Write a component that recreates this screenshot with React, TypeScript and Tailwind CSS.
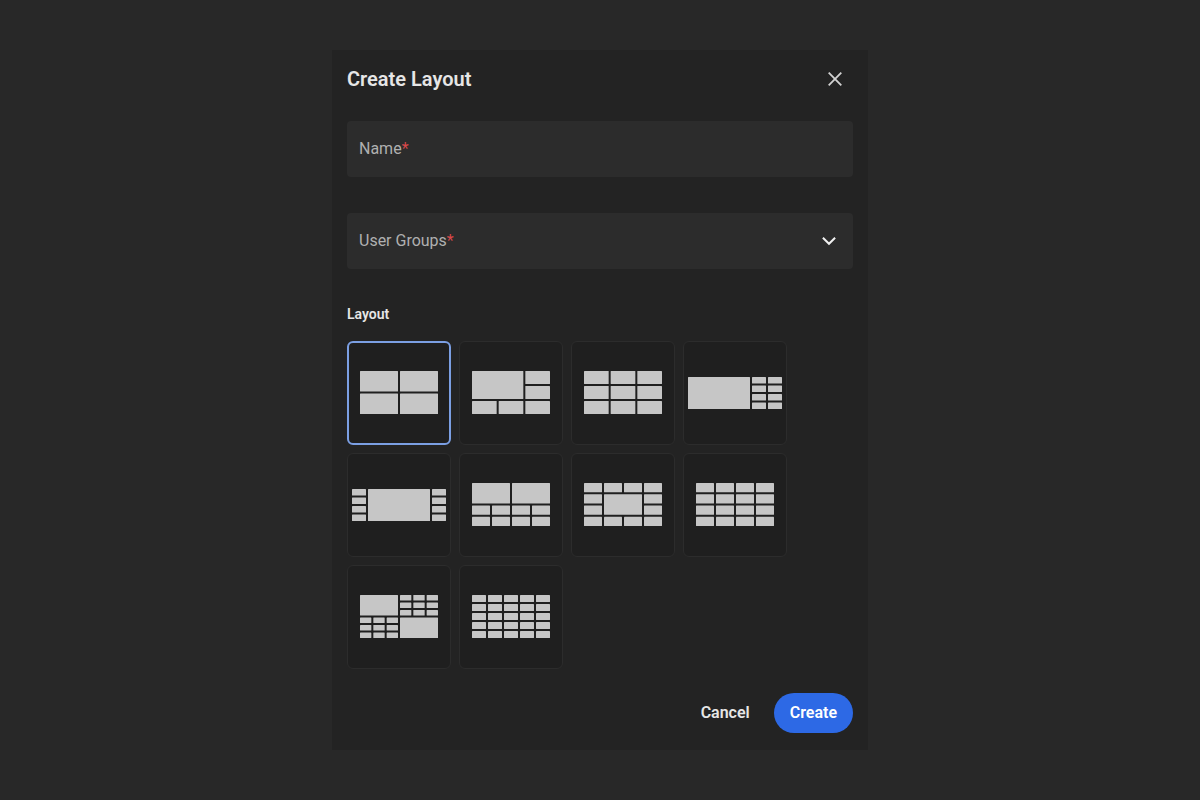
import { useState } from "react";

// x, y, width, height in grid units
type Cell = [number, number, number, number];

interface LayoutOption {
  id: string;
  label: string;
  cols: number;
  rows: number;
  width: number;
  height: number;
  cells: Cell[];
}

const block = (x: number, y: number, cols: number, rows: number, w = 1, h = 1): Cell[] =>
  Array.from({ length: cols * rows }, (_, i) => [x + (i % cols) * w, y + Math.floor(i / cols) * h, w, h]);

const layouts: LayoutOption[] = [
  { id: "2x2", label: "2 by 2", cols: 2, rows: 2, width: 80, height: 45, cells: block(0, 0, 2, 2) },
  {
    id: "1+5",
    label: "1 large, 5 small",
    cols: 3,
    rows: 3,
    width: 80,
    height: 45,
    cells: [[0, 0, 2, 2], ...block(2, 0, 1, 2), ...block(0, 2, 3, 1)],
  },
  { id: "3x3", label: "3 by 3", cols: 3, rows: 3, width: 80, height: 45, cells: block(0, 0, 3, 3) },
  {
    id: "1+8",
    label: "1 large, 8 on the right",
    cols: 6,
    rows: 4,
    width: 96,
    height: 34,
    cells: [[0, 0, 4, 4], ...block(4, 0, 2, 4)],
  },
  {
    id: "4+1+4",
    label: "1 large, 4 on each side",
    cols: 6,
    rows: 4,
    width: 96,
    height: 34,
    cells: [...block(0, 0, 1, 4), [1, 0, 4, 4], ...block(5, 0, 1, 4)],
  },
  {
    id: "2+8",
    label: "2 large, 8 small",
    cols: 4,
    rows: 4,
    width: 80,
    height: 45,
    cells: [...block(0, 0, 2, 1, 2, 2), ...block(0, 2, 4, 2)],
  },
  {
    id: "1+12",
    label: "1 large, 12 around",
    cols: 4,
    rows: 4,
    width: 80,
    height: 45,
    cells: [...block(0, 0, 4, 1), ...block(0, 1, 1, 2), [1, 1, 2, 2], ...block(3, 1, 1, 2), ...block(0, 3, 4, 1)],
  },
  { id: "4x4", label: "4 by 4", cols: 4, rows: 4, width: 80, height: 45, cells: block(0, 0, 4, 4) },
  {
    id: "2+18",
    label: "2 large, 18 small",
    cols: 6,
    rows: 6,
    width: 80,
    height: 45,
    cells: [[0, 0, 3, 3], ...block(3, 0, 3, 3), ...block(0, 3, 3, 3), [3, 3, 3, 3]],
  },
  { id: "5x5", label: "5 by 5", cols: 5, rows: 5, width: 80, height: 45, cells: block(0, 0, 5, 5) },
];

const LayoutIcon = ({ layout }: { layout: LayoutOption }) => {
  const { cols, rows, width, height, cells } = layout;
  const unitX = width / cols;
  const unitY = height / rows;
  // even box height keeps the icon on whole pixels inside the tile
  const boxHeight = height + (height % 2);

  return (
    <svg width={width} height={boxHeight} viewBox={`0 0 ${width} ${boxHeight}`} fill="#c6c6c6" aria-hidden="true">
      {cells.map(([x, y, w, h]) => (
        <rect
          key={`${x}-${y}`}
          x={x * unitX + 1}
          y={y * unitY + 1}
          width={w * unitX - 2}
          height={h * unitY - 2}
          rx={0.5}
        />
      ))}
    </svg>
  );
};

interface LayoutTileProps {
  layout: LayoutOption;
  checked: boolean;
  onSelect: (id: string) => void;
}

const LayoutTile = ({ layout, checked, onSelect }: LayoutTileProps) => (
  <label className="flex size-[104px] cursor-pointer items-center justify-center rounded-md border border-[#2c2c2c] bg-[#1f1f1f] has-checked:border-2 has-checked:border-[#7b9fe3]">
    <input
      type="radio"
      name="layout"
      value={layout.id}
      aria-label={layout.label}
      checked={checked}
      onChange={() => onSelect(layout.id)}
      className="sr-only"
    />
    <LayoutIcon layout={layout} />
  </label>
);

const Required = () => <span className="text-[#d9484a]">*</span>;

const App = () => {
  const [selected, setSelected] = useState("2x2");

  return (
    <main className="flex min-h-screen items-center justify-center bg-[#282828] font-['Roboto',sans-serif]">
      <form
        role="dialog"
        aria-labelledby="dialog-title"
        onSubmit={(e) => e.preventDefault()}
        className="w-full max-w-[536px] bg-[#232323] px-[15px] pt-[11px] pb-[17px]"
      >
        <header className="flex items-center justify-between">
          <h1 id="dialog-title" className="text-xl font-semibold text-[#e6e6e6]">
            Create Layout
          </h1>
          <button type="button" aria-label="Close" className="flex size-9 items-center justify-center">
            <svg width="24" height="24" viewBox="0 0 24 24" fill="none" stroke="#d2d2d2" strokeWidth="1.8">
              <path d="M5.7 5.7 18.3 18.3M18.3 5.7 5.7 18.3" />
            </svg>
          </button>
        </header>

        <div className="mt-6 grid items-center rounded-sm bg-[#2c2c2c]">
          <input
            id="name"
            type="text"
            required
            placeholder=" "
            className="peer col-start-1 row-start-1 h-14 w-full bg-transparent px-3 pt-4 text-base text-[#e6e6e6] outline-none"
          />
          <label
            htmlFor="name"
            className="pointer-events-none col-start-1 row-start-1 self-start px-3 pt-1 text-xs text-[#b0b0b0] peer-placeholder-shown:self-center peer-placeholder-shown:pt-0 peer-placeholder-shown:text-base"
          >
            Name
            <Required />
          </label>
        </div>

        <div className="mt-9 grid items-center rounded-sm bg-[#2c2c2c]">
          <select
            id="groups"
            required
            defaultValue=""
            className="peer col-start-1 row-start-1 h-14 w-full appearance-none bg-transparent px-3 pt-4 text-base text-[#e6e6e6] outline-none"
          >
            <option value="" />
          </select>
          <label
            htmlFor="groups"
            className="pointer-events-none col-start-1 row-start-1 px-3 text-base text-[#b0b0b0] peer-valid:self-start peer-valid:pt-1 peer-valid:text-xs"
          >
            User Groups
            <Required />
          </label>
          <svg
            className="pointer-events-none col-start-1 row-start-1 mr-3 justify-self-end"
            width="24"
            height="24"
            viewBox="0 0 24 24"
            fill="none"
            stroke="#f0f0f0"
            strokeWidth="2"
            aria-hidden="true"
          >
            <path d="M5.9 8.8 12 14.8 18.1 8.8" />
          </svg>
        </div>

        <fieldset className="mt-[35px]">
          <legend className="mb-[17px] text-sm font-semibold text-[#e6e6e6]">Layout</legend>
          <div className="flex flex-wrap gap-2">
            {layouts.map((layout) => (
              <LayoutTile key={layout.id} layout={layout} checked={layout.id === selected} onSelect={setSelected} />
            ))}
          </div>
        </fieldset>

        <footer className="mt-6 flex justify-end gap-2">
          <button type="button" className="h-10 rounded-full px-4 text-base font-semibold text-[#e6e6e6]">
            Cancel
          </button>
          <button type="submit" className="h-10 rounded-full bg-[#2d69e5] px-4 text-base font-semibold text-white">
            Create
          </button>
        </footer>
      </form>
    </main>
  );
};

export default App;
